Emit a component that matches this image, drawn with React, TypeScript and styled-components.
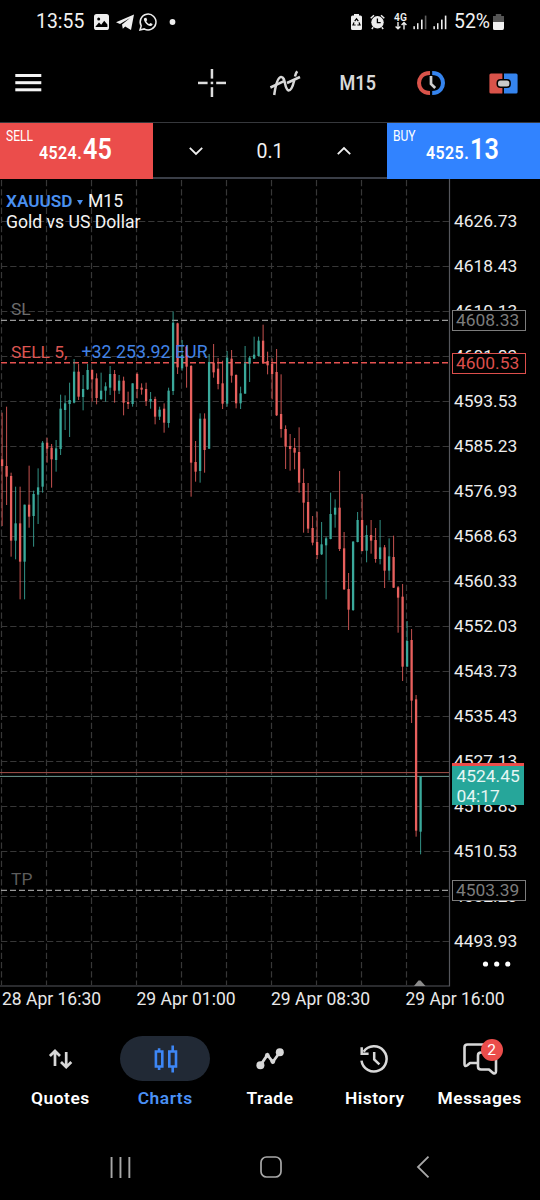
import React from "react";
import styled, { createGlobalStyle } from "styled-components";

const Global = createGlobalStyle`
  html, body { margin: 0; padding: 0; background: #000; }
  *, *::before, *::after { box-sizing: border-box; }
  svg { display: block; overflow: visible; flex: none; }
`;

const RED = "#eb4d4b";
const BLUE = "#3183ff";
const UP = "#3aa99b";
const DOWN = "#e8605d";

const Screen = styled.div`
  width: 540px;
  height: 1200px;
  display: flex;
  flex-direction: column;
  overflow: hidden;
  background: #000;
  color: #f2f2f2;
  font-family: Roboto, "Liberation Sans", sans-serif;
`;

/* ---------- status bar ---------- */

const StatusBar = styled.header`
  height: 44px;
  padding: 0 36px 0 36px;
  display: flex;
  align-items: center;
  justify-content: space-between;
`;

const StatusGroup = styled.div`
  display: flex;
  align-items: center;
`;

const StatusText = styled.span<{ $w: number; $gap?: number }>`
  flex: none;
  width: ${(p) => p.$w}px;
  margin-left: ${(p) => p.$gap ?? 0}px;
  font-size: 19.4px;
  line-height: 22px;
  white-space: nowrap;
`;

const Glyph = styled.svg<{ $gap?: number }>`
  margin-left: ${(p) => p.$gap ?? 0}px;
`;

const NetworkType = styled.div`
  width: 15px;
  height: 18px;
  margin-left: 8px;
  display: flex;
  flex-direction: column;
  align-items: center;
  font-size: 10.2px;
  line-height: 9px;
  font-weight: 600;
`;

const SignalBars = ({ gap, dimLast }: { gap: number; dimLast?: boolean }) => (
  <Glyph $gap={gap} width="14" height="16" fill="#eee">
    <rect x="0.4" y="12.2" width="1.5" height="3" />
    <rect x="4" y="9.2" width="1.5" height="6" />
    <rect x="8" y="5.6" width="1.6" height="9.6" />
    <rect x="11.8" y="1.6" width="1.6" height="13.6" opacity={dimLast ? 0.4 : 1} />
  </Glyph>
);

/* ---------- toolbar ---------- */

const Toolbar = styled.nav`
  height: 78px;
  padding-left: 15px;
  display: flex;
  align-items: center;
`;

const ToolGroup = styled.div`
  flex: 1;
  margin-left: 135px;
  display: flex;
`;

const Tool = styled.div`
  flex: 1;
  display: flex;
  align-items: center;
  justify-content: center;
`;

const Timeframe = styled.span`
  padding-top: 2px;
  font-size: 19.6px;
  line-height: 24px;
  font-weight: 600;
  color: #d8d8d8;
  transform: scaleX(0.92);
`;

/* ---------- trade strip ---------- */

const TradeStrip = styled.section`
  height: 57px;
  display: flex;
  border-top: 1px solid #36383c;
  border-bottom: 2px solid #3a3e47;
`;

const Quote = styled.div<{ $bg: string }>`
  width: 153px;
  height: 56px;
  padding: 6px 0 0 6px;
  background: ${(p) => p.$bg};
  color: #fff;
`;

const Side = styled.div`
  width: 40px;
  height: 16px;
  font-size: 14.4px;
  line-height: 16px;
  transform: scaleX(0.84);
  transform-origin: 0 0;
`;

const Price = styled.div`
  height: 30px;
  margin: -12px 0 0 33px;
  display: flex;
  align-items: baseline;
  font-weight: 600;
  white-space: nowrap;
`;

const Whole = styled.span`
  width: 44px;
  font-size: 19px;
  letter-spacing: 0.5px;
  transform: scaleX(0.84);
  transform-origin: 0 50%;
`;

const Pips = styled.span`
  font-size: 30px;
  line-height: 32px;
  transform: scaleX(0.84);
  transform-origin: 0 50%;
`;

const Volume = styled.div`
  flex: 1;
  display: flex;
  align-items: center;
  justify-content: space-between;
  padding: 2px 36px 0;
  font-size: 19.5px;
`;

/* ---------- chart ---------- */

const ChartArea = styled.section`
  height: 808px;
  display: flex;
`;

const Plot = styled.div`
  position: relative;
  width: 450px;
`;

const PlotSvg = styled.svg`
  position: absolute;
  inset: 0;
`;

const Caption = styled.div`
  position: absolute;
  left: 6px;
  top: 12px;
  font-size: 17.6px;
  line-height: 21px;
  white-space: nowrap;
  color: #f4f4f4;
`;

const CaptionRow = styled.div`
  display: flex;
  align-items: center;
`;

const Symbol = styled.span`
  width: 68px;
  font-size: 17.2px;
  color: #4a90f0;
  font-weight: 600;
`;

const SymbolArrow = styled.span`
  width: 0;
  margin: 1px 5px 0 3px;
  border: 3px solid transparent;
  border-top: 5px solid #4a90f0;
  border-bottom: 0;
`;

const OrderLabel = styled.div<{ $y: number; $color: string }>`
  position: absolute;
  left: 11px;
  top: ${(p) => p.$y}px;
  display: flex;
  font-size: 17.4px;
  line-height: 20px;
  white-space: pre;
  color: ${(p) => p.$color};
`;

const Profit = styled.span`
  margin-left: 14px;
  font-size: 17.8px;
  color: #4283e6;
`;

const PriceAxis = styled.div`
  position: relative;
  flex: 1;
  padding: 19px 0 0 4px;
`;

const AxisPrice = styled.div`
  height: 45.03px;
  display: flex;
  align-items: center;
  font-size: 17.4px;
  color: #ededed;
`;

const PriceTag = styled.div<{ $y: number; $color: string }>`
  position: absolute;
  left: 2px;
  top: ${(p) => p.$y}px;
  width: 74px;
  height: 21px;
  padding-left: 3px;
  border: 1.5px solid ${(p) => p.$color};
  background: #000;
  color: ${(p) => p.$color};
  font-size: 17.4px;
  line-height: 19px;
`;

const BidTag = styled.div`
  position: absolute;
  left: 1.5px;
  top: 584px;
  width: 72.5px;
  height: 42px;
  padding: 1px 0 0 5px;
  border-top: 3px solid ${RED};
  background: #26a69a;
  color: #e6f6f4;
  font-size: 17.4px;
  line-height: 19.5px;
`;

const MoreDots = styled.svg`
  position: absolute;
  left: 32px;
  top: 781px;
`;

const TimeAxis = styled.div`
  height: 25px;
  padding: 0 0 2px 2px;
  display: flex;
  align-items: center;
`;

const TimeLabel = styled.span`
  width: 135px;
  font-size: 17.5px;
  white-space: nowrap;
  color: #e8e8e8;
`;

/* ---------- bottom navigation ---------- */

const TabBar = styled.nav`
  height: 112px;
  padding: 24px 8px 0 8px;
  display: flex;
`;

const Tab = styled.div<{ $active?: boolean }>`
  flex: 1;
  display: flex;
  flex-direction: column;
  align-items: center;
  color: ${(p) => (p.$active ? "#4a90f5" : "#fff")};
`;

const TabIcon = styled.div<{ $active?: boolean }>`
  position: relative;
  width: 90px;
  height: 45px;
  border-radius: 23px;
  display: flex;
  align-items: center;
  justify-content: center;
  background: ${(p) => (p.$active ? "#212935" : "transparent")};
`;

const TabLabel = styled.span`
  margin-top: 7px;
  font-size: 17.4px;
  line-height: 20px;
  font-weight: 600;
  letter-spacing: 0.5px;
`;

const Badge = styled.span`
  position: absolute;
  left: 46px;
  top: 3px;
  width: 22px;
  height: 22px;
  border-radius: 50%;
  background: ${RED};
  color: #fff;
  font-size: 15.5px;
  line-height: 22px;
  text-align: center;
`;

const SystemBar = styled.footer`
  height: 76px;
  padding: 10px 110px 0 110px;
  display: flex;
  align-items: center;
  justify-content: space-between;
`;

const HomeButton = styled.svg`
  margin-right: 5px;
`;

/* ---------- data ---------- */

const PRICES = [
  "4626.73", "4618.43", "4610.13", "4601.83", "4593.53", "4585.23",
  "4576.93", "4568.63", "4560.33", "4552.03", "4543.73", "4535.43",
  "4527.13", "4518.83", "4510.53", "4502.23", "4493.93",
];

const TIMES = ["28 Apr 16:30", "29 Apr 01:00", "29 Apr 08:30", "29 Apr 16:00"];

// [rising, wick top, wick bottom, body top, body bottom], in thirds of a pixel below TICK_ORIGIN
type Candle = [number, number, number, number, number];
const TICK_ORIGIN = 111;
const CANDLES: Candle[] = [
  [0, 368, 708, 508, 528], [0, 350, 645, 528, 560], [0, 548, 800, 558, 752],
  [1, 590, 808, 700, 752], [0, 590, 928, 700, 815], [1, 644, 928, 644, 815],
  [0, 527, 713, 644, 680], [1, 602, 770, 612, 678], [1, 535, 702, 592, 614],
  [1, 453, 608, 458, 590], [0, 443, 518, 458, 476], [0, 462, 593, 473, 508],
  [1, 450, 545, 475, 510], [1, 314, 495, 356, 477], [1, 316, 420, 340, 360],
  [1, 278, 441, 330, 342], [1, 207, 340, 245, 338], [0, 222, 330, 245, 320],
  [1, 255, 361, 297, 321], [1, 222, 300, 240, 298], [0, 238, 335, 240, 268],
  [0, 250, 343, 265, 324], [1, 248, 330, 302, 327], [1, 277, 335, 289, 302],
  [1, 228, 315, 252, 293], [0, 240, 338, 252, 302], [1, 255, 312, 272, 302],
  [0, 260, 376, 272, 338], [0, 305, 357, 336, 342], [1, 280, 350, 280, 342],
  [0, 247, 325, 252, 297], [0, 280, 314, 293, 299], [0, 278, 348, 297, 334],
  [1, 306, 356, 327, 334], [0, 320, 403, 327, 380], [1, 350, 390, 359, 380],
  [0, 340, 428, 356, 398], [1, 293, 413, 302, 399], [1, 64, 315, 98, 303],
  [0, 98, 252, 100, 232], [1, 150, 242, 195, 235], [0, 168, 293, 170, 230],
  [0, 225, 620, 228, 518], [0, 453, 575, 516, 545], [1, 370, 578, 386, 543],
  [0, 370, 548, 386, 480], [1, 192, 477, 216, 476], [0, 162, 263, 218, 247],
  [0, 204, 298, 236, 282], [0, 212, 357, 280, 341], [1, 183, 350, 203, 341],
  [0, 180, 278, 206, 257], [0, 253, 355, 255, 340], [1, 290, 357, 310, 340],
  [1, 168, 311, 220, 311], [1, 198, 276, 203, 221], [1, 140, 206, 194, 206],
  [1, 140, 200, 152, 198], [0, 104, 222, 152, 217], [0, 185, 253, 213, 226],
  [0, 205, 328, 222, 252], [0, 177, 378, 246, 376], [0, 253, 443, 372, 417],
  [0, 406, 537, 417, 470], [0, 432, 542, 468, 477], [0, 444, 538, 474, 488],
  [0, 412, 608, 486, 578], [0, 536, 728, 579, 638], [0, 579, 729, 636, 716],
  [0, 678, 766, 714, 758], [0, 665, 807, 756, 795], [1, 696, 795, 763, 793],
  [1, 740, 928, 745, 766], [1, 608, 748, 672, 747], [1, 628, 713, 653, 674],
  [0, 543, 783, 653, 777], [0, 726, 900, 775, 898], [0, 849, 1020, 897, 959],
  [1, 753, 963, 755, 960], [1, 666, 757, 690, 756], [0, 612, 784, 690, 783],
  [1, 706, 817, 735, 782], [0, 690, 791, 735, 752], [0, 714, 818, 750, 807],
  [1, 690, 823, 772, 807], [0, 765, 894, 772, 842], [1, 745, 871, 799, 842],
  [0, 737, 894, 801, 893], [0, 888, 1028, 892, 923], [0, 882, 1173, 920, 1130],
  [1, 993, 1130, 1053, 1130], [0, 1017, 1299, 1050, 1232], [0, 1215, 1640, 1228, 1622],
  [1, 1458, 1693, 1458, 1625],
];

const toY = (tick: number) => TICK_ORIGIN + tick / 3;

const Chart = () => (
  <PlotSvg width="450" height="808">
    <g stroke="#373737" strokeWidth="1.2" strokeDasharray="6.3 2.9">
      {PRICES.map((p, i) => {
        const y = Math.round(41.6 + 45.03 * i) + 0.5;
        return <line key={p} x1="1" x2="449" y1={y} y2={y} />;
      })}
      {Array.from({ length: 10 }, (_, i) => (
        <line key={i} x1={1.5 + 45 * i} x2={1.5 + 45 * i} y1="1" y2="806" />
      ))}
    </g>
    <path d="M0 807H449.5V0" fill="none" stroke="#55565c" strokeWidth="1.2" />
    <path d="M414 807L418.5 801.5H420.5L425.5 807Z" fill="#8b8b8b" />
    <g strokeWidth="1.4" strokeDasharray="6 3">
      <line x1="1" x2="450" y1="141.4" y2="141.4" stroke="#9a9a9a" />
      <line x1="1" x2="450" y1="183.8" y2="183.8" stroke="#e65351" />
      <line x1="1" x2="450" y1="711.4" y2="711.4" stroke="#9a9a9a" />
    </g>
    <line x1="0" x2="449" y1="593.6" y2="593.6" stroke="#a4514b" />
    <line x1="0" x2="449" y1="597.4" y2="597.4" stroke="#6f9a92" />
    {CANDLES.map(([up, wt, wb, bt, bb], i) => {
      const x = 2.1 + 4.5 * i;
      const color = up ? UP : DOWN;
      return (
        <g key={i} fill={color}>
          <rect x={x - 0.5} y={toY(wt)} width="1" height={(wb - wt) / 3} opacity="0.85" />
          <rect x={x - 1.15} y={toY(bt)} width="2.3" height={(bb - bt) / 3} />
        </g>
      );
    })}
  </PlotSvg>
);

export default function App() {
  return (
    <Screen>
      <Global />
      <StatusBar>
        <StatusGroup>
          <StatusText $w={49}>13:55</StatusText>
          <Glyph $gap={9} width="15" height="16">
            <rect width="15" height="16" rx="2.6" fill="#eee" />
            <circle cx="4.7" cy="5" r="1.5" fill="#000" />
            <path d="M1.6 12.6L5 8.6L7.2 10.8L10.2 6.8L13.4 10.4V13H1.6Z" fill="#000" />
          </Glyph>
          <Glyph $gap={7} width="18" height="16">
            <path d="M0 8.2L18 0.4L15 16L9.2 12.4L6.8 14.8L6 10.5L14 4L4 9.9Z" fill="#eee" />
          </Glyph>
          <Glyph $gap={5} width="18" height="18" fill="none" stroke="#eee" strokeWidth="1.5">
            <path d="M1 17L2.2 12.9A7.9 7.9 0 1 1 5.2 15.9Z" />
            <path d="M5.7 4.9L7.3 4.8L8.2 7.1L7.3 8.2C8 9.6 9 10.5 10.3 11.1L11.4 10L13.6 11.1C13.5 12.6 12.3 13.3 11 13C8 12.2 5.8 9.9 5 7C4.8 6.1 5.1 5.3 5.7 4.9Z" fill="#eee" stroke="none" />
          </Glyph>
          <Glyph $gap={12} width="6" height="6">
            <circle cx="3.5" cy="3" r="2.9" fill="#eee" />
          </Glyph>
        </StatusGroup>
        <StatusGroup>
          <Glyph width="11" height="16">
            <path d="M3 0H8V1.5H9.5Q11 1.5 11 3V14.5Q11 16 9.5 16H1.5Q0 16 0 14.5V3Q0 1.5 1.5 1.5H3Z" fill="#eee" />
            <path d="M3.7 7.2L5.5 4.8L7.3 7.2M8 8.4L9 11H6.4M4.6 11H2L3 8.4" fill="none" stroke="#000" strokeWidth="1.2" />
          </Glyph>
          <Glyph $gap={8} width="15" height="16" fill="none" stroke="#eee">
            <circle cx="7.5" cy="8.3" r="6.2" fill="#eee" stroke="none" />
            <path d="M0.7 4.2L4 1.2M14.3 4.2L11 1.2M3.2 13.3L1.8 15M11.8 13.3L13.2 15" strokeWidth="1.5" />
            <path d="M7.4 4.4V8.6H10.7" stroke="#000" strokeWidth="1.3" />
          </Glyph>
          <NetworkType>
            4G
            <svg width="12" height="8" fill="none" stroke="#eee" strokeWidth="1.4">
              <path d="M3 0V6.6M0.6 4.4L3 6.8L5.4 4.4M9 7.4V0.8M6.6 3L9 0.6L11.4 3" />
            </svg>
          </NetworkType>
          <SignalBars gap={5} dimLast />
          <SignalBars gap={6} />
          <StatusText $w={39} $gap={7}>52%</StatusText>
          <Glyph width="11" height="16">
            <path d="M2.8 0H8.2V2H11V8H0V2H2.8Z" fill="#555" />
            <path d="M0 8H11V14Q11 16 9.5 16H1.5Q0 16 0 14.5Z" fill="#f2f2f2" />
          </Glyph>
        </StatusGroup>
      </StatusBar>

      <Toolbar>
        <svg width="26" height="18" fill="#f4f4f4">
          <rect x="0.3" y="0" width="26" height="3" />
          <rect x="0.3" y="7.2" width="26" height="3" />
          <rect x="0.3" y="14.3" width="26" height="3" />
        </svg>
        <ToolGroup>
          <Tool>
            <svg width="28" height="28" fill="#ddd">
              <rect x="0" y="12.7" width="9.6" height="2.5" />
              <rect x="18.2" y="12.7" width="9.8" height="2.5" />
              <rect x="12.7" y="0" width="2.5" height="9.6" />
              <rect x="12.7" y="18.2" width="2.5" height="9.8" />
              <rect x="12.7" y="12.7" width="2.5" height="2.5" />
            </svg>
          </Tool>
          <Tool>
            <svg width="30" height="26" fill="none" stroke="#d8d8d8" strokeWidth="2.5">
              <path d="M0.4 17.5L14 11.2M17 13L30 7" />
              <path d="M4.2 25C5.2 18 7.2 7.5 11 7C16 6.5 14 19.5 18.6 20.5C22 20.5 23.5 13.5 24.2 10.5" />
              <path d="M25 6.5C25.4 4.5 26 2.8 27.2 1.2" />
            </svg>
          </Tool>
          <Tool><Timeframe>M15</Timeframe></Tool>
          <Tool>
            <svg width="28" height="24" fill="none">
              <path d="M13 2C4.5 2 2 8 2 12S4.5 22 13 22" stroke="#d9534a" strokeWidth="4" />
              <path d="M15.2 2C23.5 2 26 8 26 12S23.5 22 15.2 22" stroke="#3584ee" strokeWidth="4" />
              <path d="M14 5V13L18.2 17" stroke="#d0d0d0" strokeWidth="2.7" />
            </svg>
          </Tool>
          <Tool>
            <svg width="29" height="21">
              <path d="M2 0.5H13.4V20.5H2Q0.4 20.5 0.4 19V2Q0.4 0.5 2 0.5Z" fill="#d9534a" />
              <path d="M15 0.5H27Q28.6 0.5 28.6 2V19Q28.6 20.5 27 20.5H15Z" fill="#3584ee" />
              <rect x="7.5" y="6" width="14.4" height="9" rx="4" fill="#000" />
              <rect x="9" y="7.5" width="11.4" height="6" rx="2.5" fill="#c9c9c9" />
            </svg>
          </Tool>
        </ToolGroup>
      </Toolbar>

      <TradeStrip>
        <Quote $bg={RED}>
          <Side>SELL</Side>
          <Price><Whole>4524.</Whole><Pips>45</Pips></Price>
        </Quote>
        <Volume>
          <svg width="14" height="8" fill="none" stroke="#f0f0f0" strokeWidth="1.8">
            <path d="M0.8 0.8L7 7L13.2 0.8" />
          </svg>
          <span>0.1</span>
          <svg width="14" height="8" fill="none" stroke="#f0f0f0" strokeWidth="1.8">
            <path d="M0.8 7.2L7 1L13.2 7.2" />
          </svg>
        </Volume>
        <Quote $bg={BLUE}>
          <Side>BUY</Side>
          <Price><Whole>4525.</Whole><Pips>13</Pips></Price>
        </Quote>
      </TradeStrip>

      <ChartArea>
        <Plot>
          <Chart />
          <Caption>
            <CaptionRow><Symbol>XAUUSD</Symbol><SymbolArrow />M15</CaptionRow>
            <div>Gold vs US Dollar</div>
          </Caption>
          <OrderLabel $y={120} $color="#6c6c6c">SL</OrderLabel>
          <OrderLabel $y={163} $color="#dc5552">SELL 5,<Profit>+32 253.92 EUR</Profit></OrderLabel>
          <OrderLabel $y={690} $color="#5c5c5c">TP</OrderLabel>
        </Plot>
        <PriceAxis>
          {PRICES.map((p) => <AxisPrice key={p}>{p}</AxisPrice>)}
          <PriceTag $y={131} $color="#7c7c7c">4608.33</PriceTag>
          <PriceTag $y={174} $color="#dd4f4c">4600.53</PriceTag>
          <BidTag>4524.45<br />04:17</BidTag>
          <PriceTag $y={701} $color="#7c7c7c">4503.39</PriceTag>
          <MoreDots width="30" height="8" fill="#fff">
            <circle cx="3.5" cy="4" r="2.6" />
            <circle cx="14.7" cy="4" r="2.6" />
            <circle cx="25.8" cy="4" r="2.6" />
          </MoreDots>
        </PriceAxis>
      </ChartArea>
      <TimeAxis>
        {TIMES.map((t) => <TimeLabel key={t}>{t}</TimeLabel>)}
      </TimeAxis>

      <TabBar>
        <Tab>
          <TabIcon>
            <svg width="23" height="20" fill="none" stroke="#d8d8d8" strokeWidth="2.7">
              <path d="M6 17V2.2M0.9 7L6 2L11 7M17.2 3V18M12 13L17.2 18.2L22.3 13" />
            </svg>
          </TabIcon>
          <TabLabel>Quotes</TabLabel>
        </Tab>
        <Tab $active>
          <TabIcon $active>
            <svg width="23" height="28" fill="none" stroke="#3d86f5" strokeWidth="2.6">
              <path d="M1.9 6.5H8.3V21.5H1.9ZM5.1 3.2V6.5M5.1 21.5V25M15.3 6.5H22V21.5H15.3ZM18.7 0.4V6.5M18.7 21.5V27.6" />
            </svg>
          </TabIcon>
          <TabLabel>Charts</TabLabel>
        </Tab>
        <Tab>
          <TabIcon>
            <svg width="28" height="24" fill="#d8d8d8">
              <path d="M4.4 18.2L11.4 8L16.8 15L23.8 5.2" fill="none" stroke="#d8d8d8" strokeWidth="2.8" />
              <circle cx="4.4" cy="18.2" r="4" />
              <circle cx="23.8" cy="5.2" r="4" />
              <circle cx="11.3" cy="8.4" r="2.4" />
              <circle cx="16.8" cy="14.6" r="2.4" />
            </svg>
          </TabIcon>
          <TabLabel>Trade</TabLabel>
        </Tab>
        <Tab>
          <TabIcon>
            <svg width="29" height="28" fill="none" stroke="#d8d8d8" strokeWidth="2.5">
              <path d="M1.5 15.6A12.6 12.6 0 1 0 3.6 6.8" />
              <path d="M1.7 2.3V8.7H8.6" />
              <path d="M14.2 7V14.4L19.4 19.4" />
            </svg>
          </TabIcon>
          <TabLabel>History</TabLabel>
        </Tab>
        <Tab>
          <TabIcon>
            <svg width="34" height="32" fill="none" stroke="#d8d8d8" strokeWidth="2.6" strokeLinejoin="round">
              <path d="M31 1.5H4.5Q1.5 1.5 1.5 4.5V21Q1.5 24 4 22.5L7 20H15" />
              <path d="M24 9.5H18Q15 9.5 15 12.5V23.5Q15 26.5 18 26.5H26L30 30Q33 31.5 33 28V16" />
            </svg>
            <Badge>2</Badge>
          </TabIcon>
          <TabLabel>Messages</TabLabel>
        </Tab>
      </TabBar>

      <SystemBar>
        <svg width="21" height="21" fill="#a8a8a8">
          <rect x="0.6" y="0" width="1.9" height="21" />
          <rect x="9.5" y="0" width="1.9" height="21" />
          <rect x="18.4" y="0" width="1.9" height="21" />
        </svg>
        <HomeButton width="22" height="22" fill="none" stroke="#a8a8a8" strokeWidth="1.7">
          <rect x="1" y="1" width="20" height="20" rx="5.5" />
        </HomeButton>
        <svg width="14" height="22" fill="none" stroke="#a8a8a8" strokeWidth="1.8">
          <path d="M12.5 0.6L2 11L12.5 21.4" />
        </svg>
      </SystemBar>
    </Screen>
  );
}
